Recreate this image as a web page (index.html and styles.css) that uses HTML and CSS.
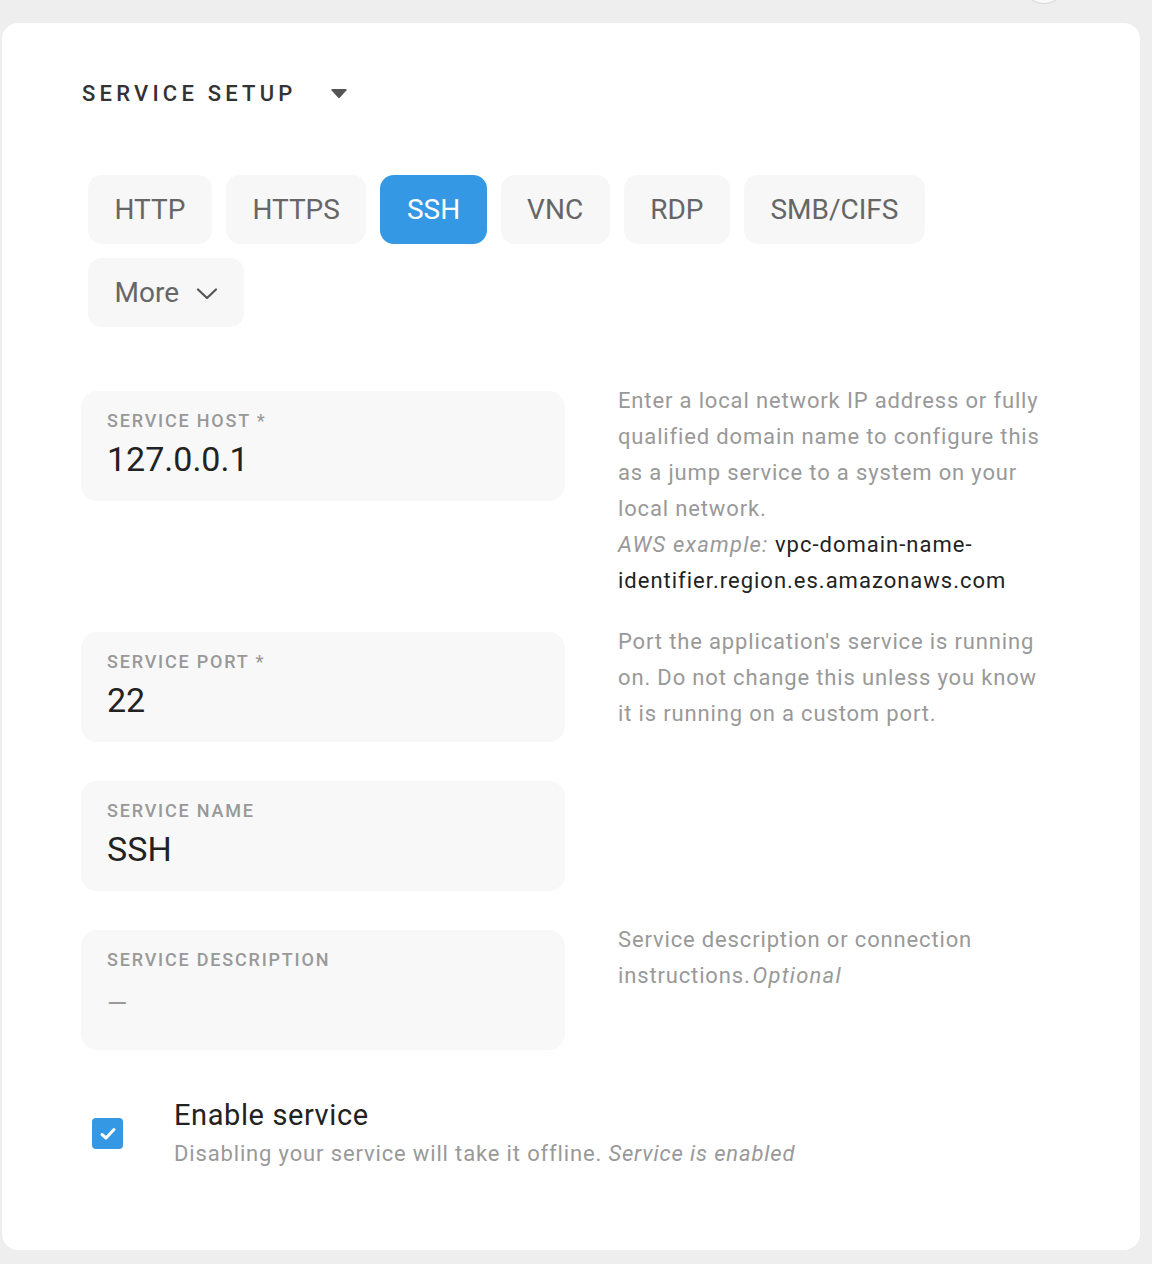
FILE: index.html
```html
<!DOCTYPE html>
<html lang="en">
<head>
<meta charset="utf-8">
<title>Service setup</title>
<link rel="stylesheet" href="styles.css">
</head>
<body>
<div class="avatar"></div>
<main class="card">
  <div class="section-title">
    <h2 class="title">SERVICE SETUP</h2>
    <svg class="caret" width="16" height="10" viewBox="0 0 16 10"><path d="M0.5 1.2 Q0 0 1.5 0 H14.5 Q16 0 15.5 1.2 L9 8.6 Q8 9.7 7 8.6 Z" fill="#555"/></svg>
  </div>

  <div class="tabs">
    <button class="tab">HTTP</button>
    <button class="tab">HTTPS</button>
    <button class="tab active">SSH</button>
    <button class="tab">VNC</button>
    <button class="tab">RDP</button>
    <button class="tab">SMB/CIFS</button>
    <button class="tab more">More
      <svg class="chev" width="22" height="14" viewBox="0 0 22 14"><path d="M2 2.5 L11 11 L20 2.5" fill="none" stroke="#555" stroke-width="2.2" stroke-linecap="round" stroke-linejoin="round"/></svg>
    </button>
  </div>

  <div class="rows">
    <div class="row row-host">
      <div class="field">
        <div class="label">SERVICE HOST *</div>
        <div class="value">127.0.0.1</div>
      </div>
      <p class="help help-host">Enter a local network IP address or fully qualified domain name to configure this as a jump service to a system on your local network.<br><em>AWS example:</em> <span class="code">vpc-domain-name-identifier.region.es.amazonaws.com</span></p>
    </div>

    <div class="row">
      <div class="field">
        <div class="label">SERVICE PORT *</div>
        <div class="value">22</div>
      </div>
      <p class="help">Port the application's service is running on. Do not change this unless you know it is running on a custom port.</p>
    </div>

    <div class="row">
      <div class="field">
        <div class="label">SERVICE NAME</div>
        <div class="value">SSH</div>
      </div>
    </div>

    <div class="row">
      <div class="field field-area">
        <div class="label">SERVICE DESCRIPTION</div>
        <div class="value placeholder">—</div>
      </div>
      <p class="help">Service description or connection instructions.<em class="opt">Optional</em></p>
    </div>
  </div>

  <div class="enable">
    <span class="checkbox">
      <svg width="18" height="16" viewBox="0 0 18 16"><path d="M3 8.5 L7 12 L15 3.5" fill="none" stroke="#fff" stroke-width="3" stroke-linecap="round" stroke-linejoin="round"/></svg>
    </span>
    <div class="enable-text">
      <div class="enable-title">Enable service</div>
      <div class="enable-sub">Disabling your service will take it offline. <em>Service is enabled</em></div>
    </div>
  </div>
</main>
</body>
</html>
```

FILE: styles.css
```css
* { box-sizing: border-box; }

html, body {
  margin: 0;
  padding: 0;
}

body {
  background: #eeeeee;
  font-family: Roboto, "Noto Sans", "Liberation Sans", sans-serif;
  color: #222;
  position: relative;
  height: 1264px;
  overflow: hidden;
}

.avatar {
  position: absolute;
  left: 1022px;
  top: -40px;
  width: 44px;
  height: 44px;
  border-radius: 50%;
  background: #fafafa;
  border: 1px solid #d6d6d6;
}

.card {
  margin: 23px 12px 0 2px;
  height: 1227px;
  background: #fff;
  border-radius: 16px;
  padding: 58px 0 0 79px;
}

.section-title {
  display: flex;
  align-items: center;
  gap: 34px;
  margin-left: 1px;
}

.title {
  margin: 0;
  font-size: 22px;
  line-height: 26px;
  font-weight: 500;
  letter-spacing: 4.2px;
  color: #333;
}

.caret { display: block; margin-top: 0; }

.tabs {
  display: flex;
  flex-wrap: wrap;
  gap: 14px 14px;
  width: 860px;
  margin: 68px 0 0 7px;
}

.tab {
  height: 69px;
  padding: 0 26.5px;
  border: none;
  border-radius: 14px;
  background: #f7f7f7;
  color: #666;
  font-family: inherit;
  font-size: 28px;
  font-weight: 400;
  display: flex;
  align-items: center;
}

.tab.active {
  background: #3498e4;
  color: #fff;
}

.tab.more { gap: 17px; padding-right: 26px; }
.chev { display: block; margin-top: 2px; }

.rows {
  display: flex;
  flex-direction: column;
  gap: 39px;
  margin-top: 64px;
}

.row {
  display: grid;
  grid-template-columns: 484px 434px;
  column-gap: 53px;
  align-items: start;
}

.field {
  background: #f8f8f8;
  border-radius: 16px;
  padding: 19px 26px 22px;
  min-height: 110px;
}

.label {
  font-size: 18px;
  line-height: 22px;
  letter-spacing: 1.8px;
  color: #999;
  font-weight: 500;
}

.value {
  margin-top: 7px;
  font-size: 34px;
  line-height: 40px;
  color: #222;
}

.field-area { min-height: 120px; }
.value.placeholder {
  color: #9a9a9a;
  font-size: 26px;
  line-height: 50px;
  margin-top: 7px;
}

.help {
  margin: -8px 0 0;
  font-size: 22px;
  line-height: 36px;
  letter-spacing: 0.85px;
  color: #999;
}

.help-host { margin-bottom: -6px; }

.help em { font-style: italic; letter-spacing: 1.2px; }
.help em.opt { margin-left: 2px; }
.code { color: #222; letter-spacing: 1px; }

.enable {
  display: flex;
  align-items: flex-start;
  margin: 48px 0 0 11px;
}

.checkbox {
  width: 31px;
  height: 31px;
  border-radius: 4px;
  background: #3498e4;
  display: flex;
  align-items: center;
  justify-content: center;
  margin-top: 20px;
  margin-right: 51px;
}

.checkbox svg { display: block; }

.enable-title {
  font-size: 29px;
  line-height: 34px;
  letter-spacing: 0.6px;
  color: #222;
}

.enable-sub {
  margin-top: 7px;
  font-size: 22px;
  line-height: 30px;
  letter-spacing: 0.85px;
  color: #999;
}

.enable-sub em { font-style: italic; }
```
